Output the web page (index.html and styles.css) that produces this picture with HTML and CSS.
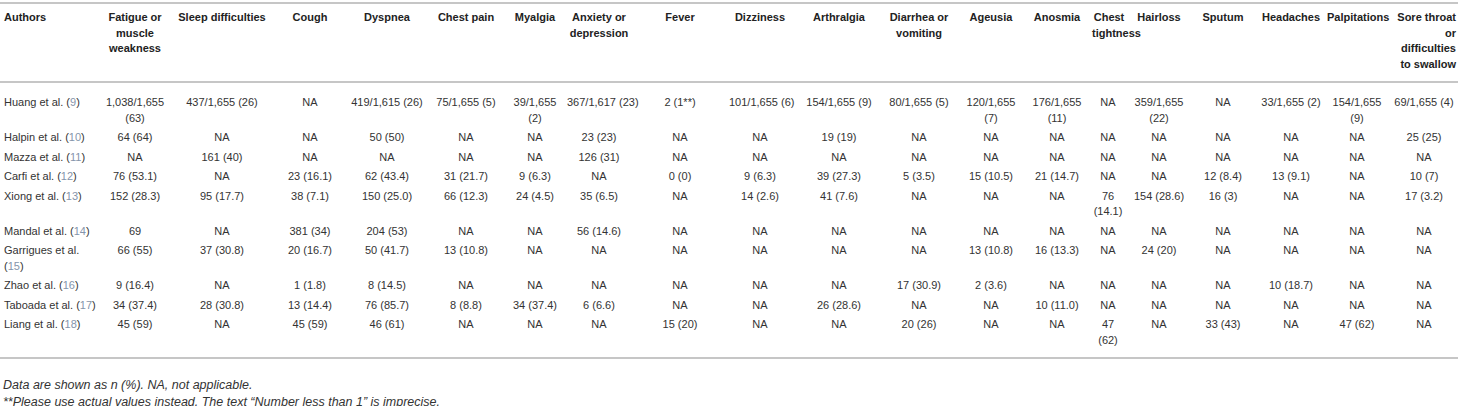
FILE: index.html
```html
<!DOCTYPE html>
<html lang="en">
<head>
<meta charset="utf-8">
<title>Persistent symptoms table</title>
<link rel="stylesheet" href="styles.css">
</head>
<body>
<div class="wrap">
<table class="data">
<colgroup>
<col class="c0"><col class="c1"><col class="c2"><col class="c3"><col class="c4"><col class="c5"><col class="c6"><col class="c7"><col class="c8"><col class="c9"><col class="c10"><col class="c11"><col class="c12"><col class="c13"><col class="c14"><col class="c15"><col class="c16"><col class="c17"><col class="c18"><col class="c19">
</colgroup>
<thead>
<tr>
<th class="auth">Authors</th>
<th>Fatigue or<br>muscle<br>weakness</th>
<th>Sleep difficulties</th>
<th>Cough</th>
<th>Dyspnea</th>
<th>Chest pain</th>
<th>Myalgia</th>
<th>Anxiety or<br>depression</th>
<th>Fever</th>
<th>Dizziness</th>
<th>Arthralgia</th>
<th>Diarrhea or<br>vomiting</th>
<th>Ageusia</th>
<th>Anosmia</th>
<th class="tight">Chest<br>tightness</th>
<th>Hairloss</th>
<th>Sputum</th>
<th>Headaches</th>
<th>Palpitations</th>
<th class="last">Sore throat<br>or<br>difficulties<br>to swallow</th>
</tr>
</thead>
<tbody>
<tr class="first">
<td class="auth">Huang et al. (<span class="ref">9</span>)</td>
<td>1,038/1,655<br>(63)</td><td>437/1,655 (26)</td><td>NA</td><td>419/1,615 (26)</td><td>75/1,655 (5)</td><td>39/1,655<br>(2)</td><td>367/1,617 (23)</td><td>2 (1**)</td><td>101/1,655 (6)</td><td>154/1,655 (9)</td><td>80/1,655 (5)</td><td>120/1,655<br>(7)</td><td>176/1,655<br>(11)</td><td>NA</td><td>359/1,655<br>(22)</td><td>NA</td><td>33/1,655 (2)</td><td>154/1,655<br>(9)</td><td>69/1,655 (4)</td>
</tr>
<tr>
<td class="auth">Halpin et al. (<span class="ref">10</span>)</td>
<td>64 (64)</td><td>NA</td><td>NA</td><td>50 (50)</td><td>NA</td><td>NA</td><td>23 (23)</td><td>NA</td><td>NA</td><td>19 (19)</td><td>NA</td><td>NA</td><td>NA</td><td>NA</td><td>NA</td><td>NA</td><td>NA</td><td>NA</td><td>25 (25)</td>
</tr>
<tr>
<td class="auth">Mazza et al. (<span class="ref">11</span>)</td>
<td>NA</td><td>161 (40)</td><td>NA</td><td>NA</td><td>NA</td><td>NA</td><td>126 (31)</td><td>NA</td><td>NA</td><td>NA</td><td>NA</td><td>NA</td><td>NA</td><td>NA</td><td>NA</td><td>NA</td><td>NA</td><td>NA</td><td>NA</td>
</tr>
<tr>
<td class="auth">Carfi et al. (<span class="ref">12</span>)</td>
<td>76 (53.1)</td><td>NA</td><td>23 (16.1)</td><td>62 (43.4)</td><td>31 (21.7)</td><td>9 (6.3)</td><td>NA</td><td>0 (0)</td><td>9 (6.3)</td><td>39 (27.3)</td><td>5 (3.5)</td><td>15 (10.5)</td><td>21 (14.7)</td><td>NA</td><td>NA</td><td>12 (8.4)</td><td>13 (9.1)</td><td>NA</td><td>10 (7)</td>
</tr>
<tr>
<td class="auth">Xiong et al. (<span class="ref">13</span>)</td>
<td>152 (28.3)</td><td>95 (17.7)</td><td>38 (7.1)</td><td>150 (25.0)</td><td>66 (12.3)</td><td>24 (4.5)</td><td>35 (6.5)</td><td>NA</td><td>14 (2.6)</td><td>41 (7.6)</td><td>NA</td><td>NA</td><td>NA</td><td>76<br>(14.1)</td><td>154 (28.6)</td><td>16 (3)</td><td>NA</td><td>NA</td><td>17 (3.2)</td>
</tr>
<tr>
<td class="auth">Mandal et al. (<span class="ref">14</span>)</td>
<td>69</td><td>NA</td><td>381 (34)</td><td>204 (53)</td><td>NA</td><td>NA</td><td>56 (14.6)</td><td>NA</td><td>NA</td><td>NA</td><td>NA</td><td>NA</td><td>NA</td><td>NA</td><td>NA</td><td>NA</td><td>NA</td><td>NA</td><td>NA</td>
</tr>
<tr>
<td class="auth">Garrigues et al.<br>(<span class="ref">15</span>)</td>
<td>66 (55)</td><td>37 (30.8)</td><td>20 (16.7)</td><td>50 (41.7)</td><td>13 (10.8)</td><td>NA</td><td>NA</td><td>NA</td><td>NA</td><td>NA</td><td>NA</td><td>13 (10.8)</td><td>16 (13.3)</td><td>NA</td><td>24 (20)</td><td>NA</td><td>NA</td><td>NA</td><td>NA</td>
</tr>
<tr>
<td class="auth">Zhao et al. (<span class="ref">16</span>)</td>
<td>9 (16.4)</td><td>NA</td><td>1 (1.8)</td><td>8 (14.5)</td><td>NA</td><td>NA</td><td>NA</td><td>NA</td><td>NA</td><td>NA</td><td>17 (30.9)</td><td>2 (3.6)</td><td>NA</td><td>NA</td><td>NA</td><td>NA</td><td>10 (18.7)</td><td>NA</td><td>NA</td>
</tr>
<tr>
<td class="auth">Taboada et al. (<span class="ref">17</span>)</td>
<td>34 (37.4)</td><td>28 (30.8)</td><td>13 (14.4)</td><td>76 (85.7)</td><td>8 (8.8)</td><td>34 (37.4)</td><td>6 (6.6)</td><td>NA</td><td>NA</td><td>26 (28.6)</td><td>NA</td><td>NA</td><td>10 (11.0)</td><td>NA</td><td>NA</td><td>NA</td><td>NA</td><td>NA</td><td>NA</td>
</tr>
<tr class="lastrow">
<td class="auth">Liang et al. (<span class="ref">18</span>)</td>
<td>45 (59)</td><td>NA</td><td>45 (59)</td><td>46 (61)</td><td>NA</td><td>NA</td><td>NA</td><td>15 (20)</td><td>NA</td><td>NA</td><td>20 (26)</td><td>NA</td><td>NA</td><td>47<br>(62)</td><td>NA</td><td>33 (43)</td><td>NA</td><td>47 (62)</td><td>NA</td>
</tr>
</tbody>
</table>
<div class="notes">
<p>Data are shown as n (%). NA, not applicable.</p>
<p>**Please use actual values instead. The text “Number less than 1” is imprecise.</p>
</div>
</div>
</body>
</html>
```
FILE: styles.css
```css
html, body {
  margin: 0;
  padding: 0;
  background: #ffffff;
}

body {
  font-family: "Liberation Sans", Arial, Helvetica, sans-serif;
  color: #333333;
}

.wrap {
  padding-top: 2px;
  width: 1458px;
}

.data {
  border-collapse: separate;
  border-spacing: 0;
  table-layout: fixed;
  width: 1458px;
  font-size: 11px;
  line-height: 15.5px;
}

.c0 { width: 98px; }
.c1 { width: 74px; }
.c2 { width: 100px; }
.c3 { width: 76px; }
.c4 { width: 78px; }
.c5 { width: 80px; }
.c6 { width: 58px; }
.c7 { width: 70px; }
.c8 { width: 92px; }
.c9 { width: 68px; }
.c10 { width: 90px; }
.c11 { width: 70px; }
.c12 { width: 74px; }
.c13 { width: 58px; }
.c14 { width: 44px; }
.c15 { width: 58px; }
.c16 { width: 70px; }
.c17 { width: 66px; }
.c18 { width: 66px; }
.c19 { width: 68px; }

.data th {
  border-top: 2px solid #c6c6c6;
  border-bottom: 2px solid #c6c6c6;
  padding: 6px 3px 9px;
  font-weight: bold;
  color: #222222;
  text-align: center;
  vertical-align: top;
  white-space: nowrap;
}

.data td {
  padding: 2px 3px;
  text-align: center;
  vertical-align: top;
  white-space: nowrap;
}

.data th.auth,
.data td.auth {
  text-align: left;
  padding-left: 4px;
}

.data th.tight {
  padding-left: 6px;
  padding-right: 4px;
}

.data th.last {
  text-align: right;
  padding-right: 2px;
}

.data tr.first td {
  padding-top: 12px;
}

.data tr.lastrow td {
  padding-bottom: 9px;
  border-bottom: 2px solid #c6c6c6;
}

.ref {
  color: #8494ab;
}

.notes {
  padding: 18px 3px 0;
  font-size: 12.5px;
  line-height: 16.5px;
  font-style: italic;
  color: #333333;
}

.notes p {
  margin: 0;
}
```
